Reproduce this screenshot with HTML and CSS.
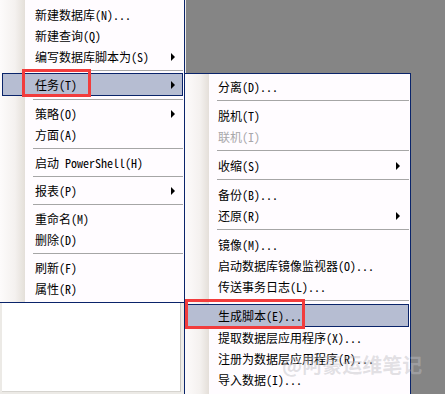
FILE: index.html
```html
<!DOCTYPE html>
<html lang="zh-CN">
<head>
    <meta charset="UTF-8">
    <meta name="viewport" content="width=device-width, initial-scale=1.0">
    <title>任务菜单</title>
    <link rel="stylesheet" href="styles.css">
</head>
<body>
    <div class="screen">
        <div class="pane"></div>
        <div class="splitter"></div>
        <div class="workspace"></div>

        <!-- 对象资源管理器右键菜单 -->
        <ul class="menu menu-main">
            <li class="item">新建数据库(N)...</li>
            <li class="item">新建查询(Q)</li>
            <li class="item sub">编写数据库脚本为(S)</li>
            <li class="sep"></li>
            <li class="item sub active">任务(T)</li>
            <li class="sep"></li>
            <li class="item sub">策略(O)</li>
            <li class="item">方面(A)</li>
            <li class="sep"></li>
            <li class="item">启动 PowerShell(H)</li>
            <li class="sep"></li>
            <li class="item sub">报表(P)</li>
            <li class="sep"></li>
            <li class="item">重命名(M)</li>
            <li class="item">删除(D)</li>
            <li class="sep"></li>
            <li class="item">刷新(F)</li>
            <li class="item">属性(R)</li>
        </ul>

        <!-- 任务子菜单 -->
        <ul class="menu menu-sub">
            <li class="item">分离(D)...</li>
            <li class="sep"></li>
            <li class="item">脱机(T)</li>
            <li class="item disabled">联机(I)</li>
            <li class="sep"></li>
            <li class="item sub">收缩(S)</li>
            <li class="sep"></li>
            <li class="item">备份(B)...</li>
            <li class="item sub">还原(R)</li>
            <li class="sep"></li>
            <li class="item">镜像(M)...</li>
            <li class="item">启动数据库镜像监视器(O)...</li>
            <li class="item">传送事务日志(L)...</li>
            <li class="sep"></li>
            <li class="item active">生成脚本(E)...</li>
            <li class="item">提取数据层应用程序(X)...</li>
            <li class="item">注册为数据层应用程序(R)...</li>
            <li class="item">导入数据(I)...</li>
        </ul>

        <div class="mark mark-task"></div>
        <div class="mark mark-script"></div>
        <div class="watermark">@阿豪运维笔记</div>
    </div>
</body>
</html>
```

FILE: styles.css
```css
body {
    margin: 0;
    padding: 0;
    background-color: #f3f2f0;
    font-family: "Noto Sans Mono CJK SC", "Noto Sans CJK SC", monospace;
    font-size: 12px;
    color: #000;
}
.screen {
    position: relative;
    width: 445px;
    height: 394px;
    overflow: hidden;
    display: flex;
    background-color: #eceae6;
}
.pane {
    width: 178px;
    margin: 0 0 2px 2px;
    background-color: #fff;
    border-right: 1px solid #c8c6c0;
    border-bottom: 1px solid #d6d4cf;
}
.splitter {
    width: 5px;
    background-color: #eeece8;
}
.workspace {
    flex: 1;
    background-color: #858585;
}
.menu {
    position: absolute;
    list-style: none;
    margin: 0;
    box-sizing: border-box;
    background-color: #fffcff;
    border: 1px solid #0a246a;
}
.menu-main {
    left: -1px;
    top: -1px;
    width: 186px;
    height: 304px;
    padding: 4px 0 0 0;
    background-image: linear-gradient(to right, #fdfbfb 0, #f4f1ef 15px, #e4dfd9 25px, transparent 25px);
}
.menu-sub {
    left: 184px;
    top: 73px;
    width: 227px;
    height: 340px;
    padding: 2px 0 0 0;
    background-image: linear-gradient(to right, #fdfbfb 0, #f4f1ef 15px, #e4dfd9 24px, transparent 24px);
}
.item {
    position: relative;
    height: 21px;
    line-height: 21px;
    white-space: nowrap;
}
.menu-main .item {
    padding-left: 35px;
}
.menu-sub .item {
    padding-left: 33px;
}
.item.sub::after {
    content: "";
    position: absolute;
    top: 7px;
    border-left: 4px solid #000;
    border-top: 4px solid transparent;
    border-bottom: 4px solid transparent;
}
.menu-main .item.sub::after {
    left: 171px;
}
.menu-sub .item.sub::after {
    left: 211px;
}
.item.active {
    background-color: #b6bdd2;
    border: 1px solid #0a246a;
    height: 21px;
    line-height: 21px;
    margin: 0 1px -1px 2px;
    top: -1px;
}
.menu-main .item.active {
    padding-left: 32px;
}
.menu-sub .item.active {
    margin-left: 0;
    padding-left: 32px;
}
.menu-main .item.active::after {
    left: 168px;
    top: 7px;
}
.item.disabled {
    color: #a8a7aa;
}
.sep {
    height: 7px;
    position: relative;
}
.menu-sub .sep {
    height: 8px;
}
.sep::before {
    content: "";
    position: absolute;
    left: 33px;
    right: 1px;
    top: 3px;
    border-top: 1px solid #a6a6a6;
}
.menu-sub .sep::before {
    left: 32px;
}
.mark {
    position: absolute;
    border: 3px solid #f23c3c;
    box-sizing: border-box;
}
.mark-task {
    left: 22px;
    top: 69px;
    width: 69px;
    height: 28px;
}
.mark-script {
    left: 185px;
    top: 299px;
    width: 120px;
    height: 30px;
}
.watermark {
    position: absolute;
    left: 282px;
    top: 350px;
    font-family: "Noto Sans CJK SC", sans-serif;
    font-size: 20px;
    font-weight: bold;
    color: rgba(190, 190, 195, 0.45);
    letter-spacing: 0;
}
```
